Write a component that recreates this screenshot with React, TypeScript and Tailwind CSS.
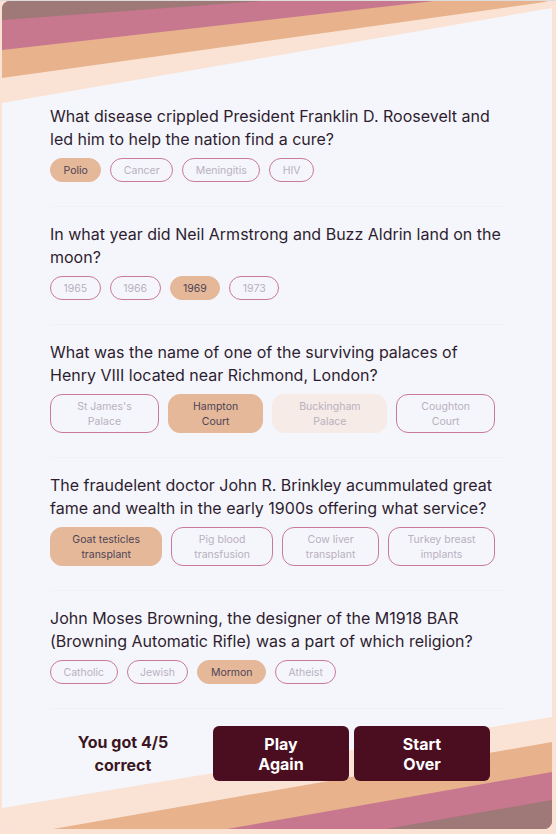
import type { ReactNode } from "react";

type Option = {
  label: string;
  state?: "picked" | "faded";
};

type Question = {
  text: string;
  options: Option[];
};

const QUESTIONS: Question[] = [
  {
    text: "What disease crippled President Franklin D. Roosevelt and led him to help the nation find a cure?",
    options: [
      { label: "Polio", state: "picked" },
      { label: "Cancer" },
      { label: "Meningitis" },
      { label: "HIV" },
    ],
  },
  {
    text: "In what year did Neil Armstrong and Buzz Aldrin land on the moon?",
    options: [
      { label: "1965" },
      { label: "1966" },
      { label: "1969", state: "picked" },
      { label: "1973" },
    ],
  },
  {
    text: "What was the name of one of the surviving palaces of Henry VIII located near Richmond, London?",
    options: [
      { label: "St James's Palace" },
      { label: "Hampton Court", state: "picked" },
      { label: "Buckingham Palace", state: "faded" },
      { label: "Coughton Court" },
    ],
  },
  {
    text: "The fraudelent doctor John R. Brinkley acummulated great fame and wealth in the early 1900s offering what service?",
    options: [
      { label: "Goat testicles transplant", state: "picked" },
      { label: "Pig blood transfusion" },
      { label: "Cow liver transplant" },
      { label: "Turkey breast implants" },
    ],
  },
  {
    text: "John Moses Browning, the designer of the M1918 BAR (Browning Automatic Rifle) was a part of which religion?",
    options: [
      { label: "Catholic" },
      { label: "Jewish" },
      { label: "Mormon", state: "picked" },
      { label: "Atheist" },
    ],
  },
];

const PILL_STYLES = {
  picked: "border-[#e5b899] bg-[#e5b899] text-[#4d4356]",
  faded: "border-[#f6ebe6] bg-[#f6ebe6] text-[#b9b0bf]",
  idle: "border-[#c9799a] bg-transparent text-[#b9b0bf]",
};

export default function App() {
  return (
    <div
      className="min-h-[834px] w-[556px] border-t border-[#dcdcdc] bg-[#fae3d4] pl-[2px] pr-[4px]"
      style={{ fontFamily: "Inter, 'Noto Sans', sans-serif" }}
    >
      <div className="relative overflow-hidden rounded-lg bg-[#f5f6fb]">
        <TopStripes />
        <BottomStripes />

        <div className="relative z-10 px-12 pt-[104px] pb-12">
          {QUESTIONS.map((q, i) => (
            <QuestionBlock key={i} question={q} />
          ))}

          <div className="flex items-center pt-[17px]">
            <p className="w-[146px] text-center text-base font-bold leading-[23px] text-[#3b1622]">
              You got 4/5 correct
            </p>
            <div className="ml-[17px] flex gap-[5px]">
              <DarkButton>
                Play
                <br />
                Again
              </DarkButton>
              <DarkButton>
                Start
                <br />
                Over
              </DarkButton>
            </div>
          </div>
        </div>
      </div>
    </div>
  );
}

function QuestionBlock({ question }: { question: Question }) {
  return (
    <section className="border-b border-[#eff1f6] pt-4 pb-6 first:pt-0">
      <h2 className="text-base font-normal leading-[23px] text-[#2e1d30]">
        {question.text}
      </h2>
      <div className="mt-[7px] flex">
        {question.options.map((o) => (
          <span
            key={o.label}
            className={`mr-[9px] rounded-xl border px-[12.5px] py-[3.5px] text-center text-[10.5px] leading-[15px] ${
              PILL_STYLES[o.state ?? "idle"]
            }`}
          >
            {o.label}
          </span>
        ))}
      </div>
    </section>
  );
}

function DarkButton({ children }: { children: ReactNode }) {
  return (
    <button className="flex h-[55px] w-[136px] items-center justify-center rounded-md bg-[#4a0e20] text-base font-bold leading-5 text-white">
      <span>{children}</span>
    </button>
  );
}

function TopStripes() {
  return (
    <svg
      className="absolute top-0 left-0 h-[110px] w-[550px]"
      viewBox="0 0 550 110"
      preserveAspectRatio="none"
    >
      <polygon points="0,0 550,0 550,7 0,102" fill="#fae3d4" />
      <polygon points="0,0 550,0 0,77" fill="#e7b28c" />
      <polygon points="0,0 432,0 0,49" fill="#c7778e" />
      <polygon points="0,0 261,0 0,19" fill="#9f7878" />
    </svg>
  );
}

function BottomStripes() {
  return (
    <svg
      className="absolute right-0 bottom-0 h-[120px] w-[550px]"
      viewBox="0 0 550 120"
      preserveAspectRatio="none"
    >
      <polygon points="0,99 550,8 550,120 0,120" fill="#fae3d4" />
      <polygon points="51,120 550,33 550,120" fill="#e7b28c" />
      <polygon points="225,120 550,63 550,120" fill="#c7778e" />
      <polygon points="384,120 550,91 550,120" fill="#9f7878" />
    </svg>
  );
}
